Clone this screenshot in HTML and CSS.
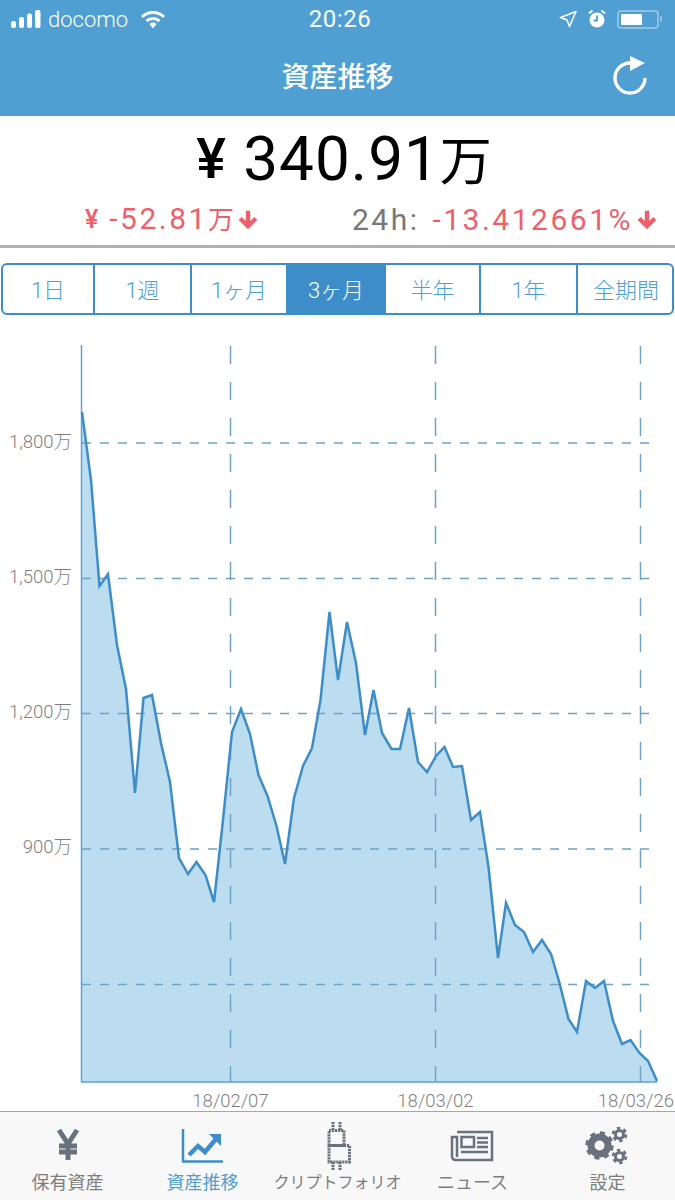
FILE: index.html
```html
<!DOCTYPE html>
<html lang="ja">
  <head>
    <meta charset="UTF-8" />
    <meta name="viewport" content="width=device-width, initial-scale=1.0" />
    <title>資産推移</title>
    <link rel="stylesheet" href="styles.css">
  </head>
  <body>
    <header class="cabecalho">
      <div class="statusBar">
        <div class="statusLado">
          <svg class="sinal" width="30" height="18" viewBox="0 0 30 18">
            <rect x="0" y="11" width="5" height="7" rx="2" fill="#fff"/>
            <rect x="8" y="7" width="5" height="11" rx="2" fill="#fff"/>
            <rect x="16" y="3.500" width="5" height="14.500" rx="2" fill="#fff"/>
            <rect x="24" y="0" width="5.500" height="18" rx="2" fill="#fff"/>
          </svg>
          <span class="operadora">docomo</span>
          <svg class="wifi" width="26" height="19" viewBox="0 0 26 19">
            <path d="M2 7 A16 16 0 0 1 24 7 M6.500 11 A10 10 0 0 1 19.500 11" fill="none" stroke="#fff" stroke-width="3"/>
            <path d="M9.500 14 A5.500 5.500 0 0 1 16.500 14 L13 18.500 Z" fill="#fff"/>
          </svg>
        </div>
        <span class="horaStatus">20:26</span>
        <div class="statusLado statusDireita">
          <svg width="18" height="18" viewBox="0 0 18 18">
            <path d="M17 1.500 L1.500 7.500 L8 10 L10.500 16.500 Z" fill="none" stroke="#fff" stroke-width="1.600" stroke-linejoin="round"/>
          </svg>
          <svg class="alarme" width="18" height="20" viewBox="0 0 18 20">
            <circle cx="9" cy="11" r="7.500" fill="#fff"/>
            <path d="M9 6.500 V11.500 H5.500" fill="none" stroke="#4f9fd2" stroke-width="1.800"/>
            <path d="M1 4.500 L4.500 1.500 M17 4.500 L13.500 1.500" stroke="#fff" stroke-width="2"/>
          </svg>
          <div class="bateria"><div class="bateriaCarga"></div></div>
          <div class="bateriaPonta"></div>
        </div>
      </div>
      <div class="navBar">
        <h1 class="titulo">資産推移</h1>
        <svg class="atualizar" width="36" height="41" viewBox="0 0 36 41">
          <path d="M18 7 A15 15 0 1 0 33 22" fill="none" stroke="#fff" stroke-width="3.400"/>
          <path d="M18 0 L33 7 L18 15 Z" fill="#fff"/>
        </svg>
      </div>
    </header>

    <section class="resumo">
      <div class="total"><span class="iene">¥</span> 340.91<span class="man">万</span></div>
      <div class="variacoes">
        <div class="variacao">
          <span class="iene">¥</span>
          <span class="valor">-52.81<span class="man">万</span></span>
          <svg class="seta" width="22" height="22" viewBox="0 0 20 20"><path d="M10 18.500 L1.500 10 L4.300 7.200 L8 11 V1.500 H12 V11 L15.700 7.200 L18.500 10 Z" fill="#ee5f6c"/></svg>
        </div>
        <div class="variacao">
          <span class="rotulo24">24h:</span>
          <span class="valor">-13.412661%</span>
          <svg class="seta" width="22" height="22" viewBox="0 0 20 20"><path d="M10 18.500 L1.500 10 L4.300 7.200 L8 11 V1.500 H12 V11 L15.700 7.200 L18.500 10 Z" fill="#ee5f6c"/></svg>
        </div>
      </div>
    </section>

    <nav class="periodos">
      <div class="periodo">1日</div>
      <div class="periodo">1週</div>
      <div class="periodo">1ヶ月</div>
      <div class="periodo ativo">3ヶ月</div>
      <div class="periodo">半年</div>
      <div class="periodo">1年</div>
      <div class="periodo ultimo">全期間</div>
    </nav>

    <svg class="grafico" width="675" height="781" viewBox="0 330 675 781">
      <polygon class="area" points="82,412 91,480 99.500,586 108,574 117,645 126,689 135,793 143.500,698 152,695 161,743 170,782 179,858 188,874 196.500,862 205.500,875 214,902 223,820 232,732 241,709 250,734 258.500,775 267.500,796 276.500,826 285,864 294,798 303,766 312,748 320.500,700 329.500,612 338,680 347,622 356,663 365,735 373.500,690 382,733 391.500,749 400,749 409,708 418,762 427,772 436,756 444.500,747 453,767 462,766 471,820 480,812 488.500,867 498,958 506,903 515,925 524,932 533,952 542,940 551,954 559.500,983 568.500,1019 577,1032 586,981 595,988 604,981 613,1021 622,1044 630.500,1040 639.500,1053 648,1061 657,1081 657,1082 82,1082"/>
      <g class="grade">
        <line x1="82" y1="443" x2="650" y2="443"/>
        <line x1="82" y1="578.500" x2="650" y2="578.500"/>
        <line x1="82" y1="713.500" x2="650" y2="713.500"/>
        <line x1="82" y1="849" x2="650" y2="849"/>
        <line x1="82" y1="984.500" x2="650" y2="984.500"/>
      </g>
      <g class="gradeV">
        <line x1="230.500" y1="346" x2="230.500" y2="1082"/>
        <line x1="435.500" y1="346" x2="435.500" y2="1082"/>
        <line x1="640.500" y1="346" x2="640.500" y2="1082"/>
      </g>
      <path class="eixo" d="M81.500 345 V1082 H657"/>
      <polyline class="linha" points="82,412 91,480 99.500,586 108,574 117,645 126,689 135,793 143.500,698 152,695 161,743 170,782 179,858 188,874 196.500,862 205.500,875 214,902 223,820 232,732 241,709 250,734 258.500,775 267.500,796 276.500,826 285,864 294,798 303,766 312,748 320.500,700 329.500,612 338,680 347,622 356,663 365,735 373.500,690 382,733 391.500,749 400,749 409,708 418,762 427,772 436,756 444.500,747 453,767 462,766 471,820 480,812 488.500,867 498,958 506,903 515,925 524,932 533,952 542,940 551,954 559.500,983 568.500,1019 577,1032 586,981 595,988 604,981 613,1021 622,1044 630.500,1040 639.500,1053 648,1061 657,1081"/>
      <text class="rotuloY" x="72" y="448">1,800万</text>
      <text class="rotuloY" x="72" y="583">1,500万</text>
      <text class="rotuloY" x="72" y="718">1,200万</text>
      <text class="rotuloY" x="72" y="853">900万</text>
      <text class="rotuloX" x="230.500" y="1107">18/02/07</text>
      <text class="rotuloX" x="435.500" y="1107">18/03/02</text>
      <text class="rotuloX rotuloFim" x="674" y="1107">18/03/26</text>
    </svg>

    <footer class="abas">
      <div class="aba">
        <svg class="abaIcone" width="44" height="40" viewBox="0 0 44 40">
          <path d="M13 4 L22 18 L31 4 M13 20 H31 M13 26 H31 M22 17 V34" fill="none" stroke="#68727d" stroke-width="5"/>
        </svg>
        <span>保有資産</span>
      </div>
      <div class="aba abaAtiva">
        <svg class="abaIcone" width="44" height="40" viewBox="0 0 44 40">
          <path d="M2 3 V35.500 H42" fill="none" stroke="#3d8ec8" stroke-width="2.500"/>
          <path d="M8 29 L17 20 L24 26 L35 13" fill="none" stroke="#3d8ec8" stroke-width="4.500"/>
          <path d="M28 8 H40 V20 Z" fill="#3d8ec8"/>
        </svg>
        <span>資産推移</span>
      </div>
      <div class="aba">
        <svg class="abaIcone" width="44" height="40" viewBox="0 0 44 40">
          <path d="M17 -4 V4 M24 -4 V4 M17 36 V44 M24 36 V44 M13 4.500 H28 V19.500 H13 Z M13 19.500 H33.500 V36 H13 Z" fill="none" stroke="#68727d" stroke-width="3" stroke-dasharray="2.200 0.800"/>
        </svg>
        <span class="textoLongo">クリプトフォリオ</span>
      </div>
      <div class="aba">
        <svg class="abaIcone" width="44" height="40" viewBox="0 0 44 40">
          <path d="M6 6 H41 V34 H5 Q1 34 1 30 V11 H6 V31" fill="none" stroke="#68727d" stroke-width="2.500"/>
          <path d="M10.500 11 H23 V21 H10.500 Z" fill="none" stroke="#68727d" stroke-width="2.500"/>
          <path d="M26 12 H37 M26 16.500 H37 M26 21 H37 M10 26 H37" fill="none" stroke="#68727d" stroke-width="2.500"/>
        </svg>
        <span>ニュース</span>
      </div>
      <div class="aba">
        <svg class="abaIcone" width="44" height="40" viewBox="0 0 44 40">
          <circle cx="13.500" cy="19.500" r="8.500" fill="none" stroke="#68727d" stroke-width="7"/>
          <circle cx="13.500" cy="19.500" r="12.500" fill="none" stroke="#68727d" stroke-width="3.500" stroke-dasharray="5 4.820"/>
          <circle cx="33.500" cy="8.500" r="4" fill="none" stroke="#68727d" stroke-width="3"/>
          <circle cx="33.500" cy="8.500" r="6.500" fill="none" stroke="#68727d" stroke-width="2.500" stroke-dasharray="3.400 3.400"/>
          <circle cx="33.500" cy="30.500" r="4" fill="none" stroke="#68727d" stroke-width="3"/>
          <circle cx="33.500" cy="30.500" r="6.500" fill="none" stroke="#68727d" stroke-width="2.500" stroke-dasharray="3.400 3.400"/>
        </svg>
        <span>設定</span>
      </div>
    </footer>
  </body>
</html>
```

FILE: styles.css
```css
body {
  margin: 0;
  width: 675px;
  height: 1200px;
  overflow: hidden;
  background-color: white;
  font-family: Roboto, "Noto Sans CJK JP", sans-serif;
}
.cabecalho {
  height: 116px;
  background-color: #4f9fd2;
  color: white;
}
.statusBar {
  display: flex;
  align-items: center;
  justify-content: space-between;
  height: 38px;
  padding: 0 13px 0 11px;
}
.statusLado {
  display: flex;
  align-items: center;
  gap: 7px;
  width: 160px;
}
.statusDireita {
  justify-content: flex-end;
  gap: 11px;
  width: 120px;
}
.operadora {
  font-size: 22px;
  font-weight: 300;
}
.wifi {
  margin-left: 5px;
}
.horaStatus {
  font-size: 24px;
  letter-spacing: 0.5px;
  margin-left: -33px;
}
.bateria {
  width: 42px;
  height: 19px;
  box-sizing: border-box;
  border: 2px solid #8ec0e2;
  border-radius: 4px;
  padding: 2px;
}
.bateriaCarga {
  width: 21px;
  height: 100%;
  background-color: white;
}
.bateriaPonta {
  width: 2px;
  height: 6px;
  background-color: #8ec0e2;
  margin-left: -10px;
}
.navBar {
  display: flex;
  align-items: center;
  justify-content: center;
  height: 74px;
  position: relative;
}
.titulo {
  margin: 0;
  font-size: 28px;
  font-weight: 500;
}
.atualizar {
  position: absolute;
  right: 27px;
  top: 18px;
}
.resumo {
  box-sizing: border-box;
  height: 132px;
  border-bottom: 3px solid #b0b0b0;
}
.total {
  padding: 8px 0 0 14px;
  text-align: center;
  font-size: 62px;
  line-height: 70px;
  letter-spacing: 1px;
  color: black;
}
.total .iene {
  font-size: 56px;
  font-weight: 500;
  vertical-align: 2px;
}
.total .man {
  font-size: 52px;
}
.variacoes {
  display: flex;
  justify-content: space-between;
  padding: 3px 17px 0 85px;
  color: #ee5f6c;
  font-size: 30px;
  line-height: 36px;
  letter-spacing: 2.500px;
}
.variacao {
  display: flex;
  align-items: center;
}
.variacao .iene {
  font-size: 25px;
  font-weight: 500;
  letter-spacing: 0;
}
.variacao .man {
  font-size: 26px;
  letter-spacing: 0;
}
.valor {
  margin-left: 11px;
}
.rotulo24 {
  color: #777777;
}
.rotulo24 + .valor {
  margin-left: 13px;
}
.seta {
  margin-left: 3px;
}
.periodos {
  display: grid;
  grid-template-columns: 92px 97px 96px 98px 95px 97px 96px;
  box-sizing: border-box;
  width: 673px;
  height: 52px;
  margin: 15px 0 0 1px;
  border: 2px solid #3d8ec8;
  border-radius: 6px;
  overflow: hidden;
  color: #4f9fd2;
  font-size: 22px;
  font-weight: 300;
}
.periodo {
  display: flex;
  align-items: center;
  justify-content: center;
  border-right: 2px solid #3d8ec8;
  padding-bottom: 2px;
}
.periodo.ultimo {
  border-right: none;
}
.periodo.ativo {
  background-color: #3d8ec8;
  color: white;
}
.grafico {
  display: block;
  margin-top: 15px;
}
.area {
  fill: #bcdcf0;
}
.grade line {
  stroke: #6fa3c4;
  stroke-width: 1.500;
  stroke-dasharray: 9 9;
}
.gradeV line {
  stroke: #6fa3c4;
  stroke-width: 1.500;
  stroke-dasharray: 18 18;
}
.eixo {
  fill: none;
  stroke: #5ba3d4;
  stroke-width: 1.500;
}
.linha {
  fill: none;
  stroke: #3d8ec8;
  stroke-width: 2.500;
}
.rotuloY {
  fill: #7f7f7f;
  font-size: 18.500px;
  font-weight: 300;
  text-anchor: end;
}
.rotuloX {
  fill: #7f7f7f;
  font-size: 18.500px;
  font-weight: 300;
  text-anchor: middle;
}
.rotuloFim {
  text-anchor: end;
}
.abas {
  display: grid;
  grid-template-columns: repeat(5, 135px);
  box-sizing: border-box;
  height: 89px;
  background-color: #f8f8f8;
  border-top: 1.500px solid #a6a6a6;
  color: #7d7d7d;
  font-size: 18px;
  line-height: 22px;
  text-align: center;
}
.aba {
  display: flex;
  flex-direction: column;
  align-items: center;
  padding-top: 14px;
  gap: 6px;
  white-space: nowrap;
}
.abaIcone {
  overflow: visible;
}
.textoLongo {
  font-size: 16px;
}
.abaAtiva {
  color: #4f9fd2;
}
```
